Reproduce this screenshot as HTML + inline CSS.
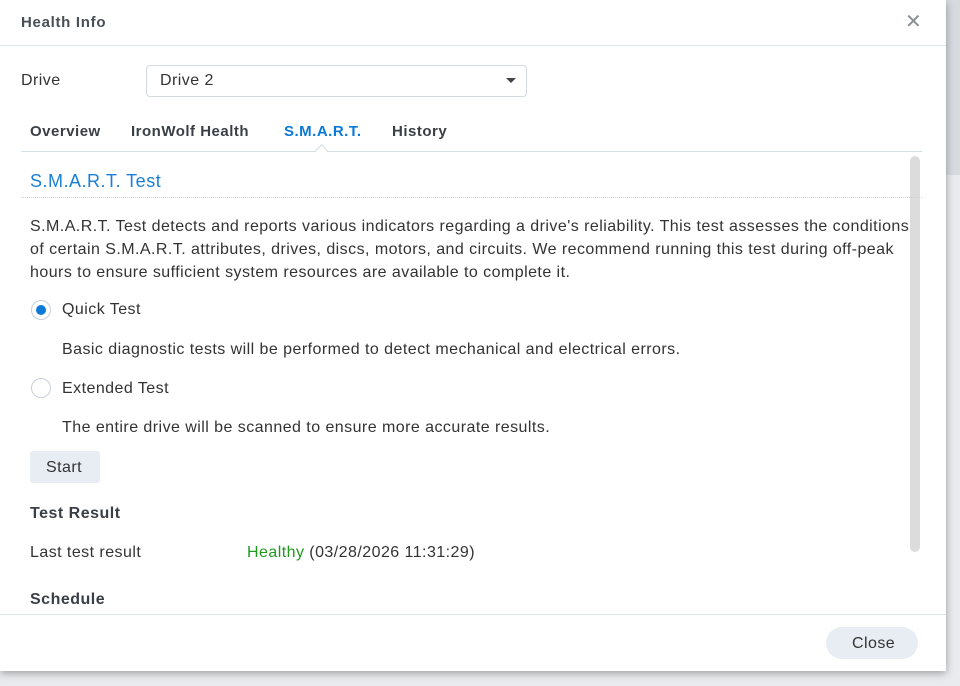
<!DOCTYPE html>
<html><head><style>
body{margin:0;width:960px;height:686px;background:#e9ebee;font-family:"Liberation Sans",sans-serif;position:relative;overflow:hidden;color:#333}
.dlg{position:absolute;left:0;top:0;width:946px;height:670px;background:#fff;box-shadow:0 3px 8px rgba(0,0,0,.35);}
.a{position:absolute;white-space:nowrap}
.p{font-size:16px;letter-spacing:.45px;color:#333}
.t{font-size:15px;font-weight:bold;color:#3a3f46;letter-spacing:.5px}
</style></head><body>
<div style="position:absolute;left:946px;top:0;width:14px;height:175px;background:#d7dbe0"></div>
<div class="dlg">
<div class="a" style="left:21px;top:14px;font-size:15px;font-weight:bold;color:#4a4f57;letter-spacing:.7px">Health Info</div>
<div class="a" style="left:905px;top:9px;font-size:20px;color:#8a8f96">✕</div>
<div class="a" style="left:0;top:45px;width:946px;height:1px;background:#dde4ea"></div>
<div class="a p" style="left:21px;top:72px">Drive</div>
<div class="a" style="left:146px;top:65px;width:379px;height:30px;border:1px solid #d3d9df;border-radius:4px"></div>
<div class="a p" style="left:160px;top:72px">Drive 2</div>
<div class="a" style="left:506px;top:78px;width:0;height:0;border-left:5px solid transparent;border-right:5px solid transparent;border-top:5px solid #444"></div>
<div class="a t" style="left:30px;top:123px">Overview</div>
<div class="a t" style="left:131px;top:123px">IronWolf Health</div>
<div class="a t" style="left:284px;top:123px;color:#0a79d8">S.M.A.R.T.</div>
<div class="a t" style="left:392px;top:123px">History</div>
<div class="a" style="left:21px;top:151px;width:901px;height:1px;background:#d5dde5"></div>
<div class="a" style="left:317px;top:146px;width:8px;height:8px;background:#fff;border-left:1px solid #d5dde5;border-top:1px solid #d5dde5;transform:rotate(45deg)"></div>
<div class="a" style="left:910px;top:156px;width:10px;height:396px;background:#dcdcdc;border-radius:5px"></div>
<div class="a" style="left:30px;top:171px;font-size:18px;color:#1a7fd6;letter-spacing:.5px">S.M.A.R.T. Test</div>
<div class="a" style="left:21px;top:197px;width:901px;border-top:1px dotted #c9d0d6"></div>
<div class="a p" style="left:30px;top:215px;line-height:23px">S.M.A.R.T. Test detects and reports various indicators regarding a drive's reliability. This test assesses the conditions<br>of certain S.M.A.R.T. attributes, drives, discs, motors, and circuits. We recommend running this test during off-peak<br>hours to ensure sufficient system resources are available to complete it.</div>
<div class="a" style="left:31px;top:300px;width:18px;height:18px;border:1px solid #c8d0d8;border-radius:50%"></div>
<div class="a" style="left:36px;top:305px;width:10px;height:10px;background:#0a79d8;border-radius:50%"></div>
<div class="a p" style="left:62px;top:301px">Quick Test</div>
<div class="a p" style="left:62px;top:341px">Basic diagnostic tests will be performed to detect mechanical and electrical errors.</div>
<div class="a" style="left:31px;top:378px;width:18px;height:18px;border:1px solid #c8d0d8;border-radius:50%"></div>
<div class="a p" style="left:62px;top:380px">Extended Test</div>
<div class="a p" style="left:62px;top:419px">The entire drive will be scanned to ensure more accurate results.</div>
<div class="a" style="left:30px;top:451px;width:70px;height:32px;background:#e8edf3;border-radius:3px"></div>
<div class="a p" style="left:46px;top:459px">Start</div>
<div class="a t" style="left:30px;top:505px;font-size:16px">Test Result</div>
<div class="a p" style="left:30px;top:544px">Last test result</div>
<div class="a p" style="left:247px;top:544px"><span style="color:#1f9a1f">Healthy</span> (03/28/2026 11:31:29)</div>
<div class="a t" style="left:30px;top:591px;font-size:16px">Schedule</div>
<div class="a" style="left:0;top:614px;width:946px;height:56px;background:#fff;border-top:1px solid #dde4ea"></div>
<div class="a" style="left:826px;top:627px;width:92px;height:32px;background:#e8edf3;border-radius:16px"></div>
<div class="a p" style="left:852px;top:635px">Close</div>
</div>
</body></html>
